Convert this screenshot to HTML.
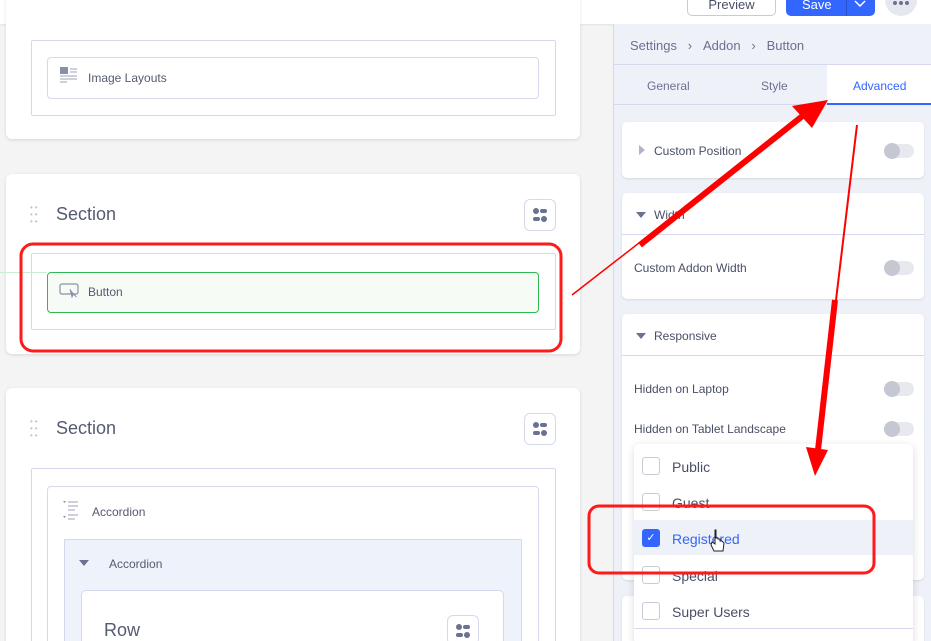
<!DOCTYPE html>
<html><head><meta charset="utf-8"><style>
*{box-sizing:border-box;margin:0;padding:0}
html,body{width:931px;height:641px;overflow:hidden}
body{background:#f4f4f5;font-family:"Liberation Sans",sans-serif;position:relative;color:#4a4f66}
.a{position:absolute}
.card{position:absolute;background:#fff;border-radius:6px;box-shadow:0 1px 3px rgba(0,0,0,.12)}
.box{position:absolute;border:1px solid #d6d8ee;border-radius:2px}
.el{position:absolute;border:1px solid #d6d8ee;border-radius:4px;background:#fff;font-size:12px;color:#555b70}
.ib{position:absolute;width:32px;height:32px;border:1px solid #d6d8ee;border-radius:6px;background:#fff}
.tg{position:absolute;width:30px;height:14px;border-radius:7px;background:#e8e9ee}
.tg:before{content:"";position:absolute;left:0;top:-1px;width:16px;height:16px;border-radius:50%;background:#c5c8d3}
.pc{position:absolute;left:622px;width:302px;background:#fff;border-radius:5px;box-shadow:0 1px 2px rgba(0,0,0,.1);font-size:12px;color:#4a4f66}
.cb{position:absolute;left:8px;width:18px;height:18px;border:1px solid #c8cad6;border-radius:3px;background:#fff}
.it{position:absolute;left:38px;font-size:14px;color:#4a4f66}
</style></head><body>
<div class="a" style="left:0;top:0;width:931px;height:24px;background:#fff;box-shadow:0 1px 2px rgba(0,0,0,.08)"></div>
<div class="a" style="left:687px;top:-10px;width:89px;height:26px;border:1px solid #c8cad6;border-radius:5px;background:#fff;text-align:center;font-size:13px;line-height:24px;color:#4a4f66;padding-top:2px">Preview</div>
<div class="a" style="left:786px;top:-10px;width:89px;height:26px;border-radius:5px;background:#3366ff;color:#fff;font-size:13px;line-height:26px;padding-left:16px;padding-top:2px">Save</div>
<div class="a" style="left:846px;top:-10px;width:1px;height:26px;background:#2452d0"></div>
<svg class="a" style="left:852px;top:0" width="16" height="10"><path d="M3 1l5 5 5-5" fill="none" stroke="#fff" stroke-width="1.5"/></svg>
<div class="a" style="left:885px;top:-16px;width:32px;height:32px;border-radius:50%;background:#e6e8ef"></div>
<svg class="a" style="left:891px;top:0" width="20" height="8"><circle cx="4" cy="3" r="2" fill="#6b7190"/><circle cx="10" cy="3" r="2" fill="#6b7190"/><circle cx="16" cy="3" r="2" fill="#6b7190"/></svg>

<div class="card" style="left:6px;top:-10px;width:574px;height:149px"></div>
<div class="box" style="left:31px;top:40px;width:525px;height:76px"></div>
<div class="el" style="left:47px;top:57px;width:492px;height:42px"></div>
<svg class="a" style="left:58px;top:66px" width="22" height="22"><rect x="2" y="1" width="8" height="7" fill="#8a8fa8"/><path d="M12 3h7M12 6h7M2 10h17M2 13h17M2 16h7" stroke="#b0b4c8" stroke-width="1.2"/></svg>
<div class="a" style="left:88px;top:71px;font-size:12px;color:#555b70">Image Layouts</div>

<div class="card" style="left:6px;top:174px;width:574px;height:180px"></div>
<div class="a" style="left:30px;top:204px;color:#c0c3d0;font-size:8px;line-height:7px;letter-spacing:2px">••<br>••<br>••</div>
<div class="a" style="left:56px;top:204px;font-size:18px;color:#555b70">Section</div>
<div class="ib" style="left:524px;top:199px"></div>
<svg class="a" style="left:532px;top:207px" width="16" height="16"><circle cx="4" cy="4" r="3" fill="#6b7190"/><rect x="8" y="2" width="7" height="4" rx="2" fill="#6b7190"/><rect x="1" y="10" width="7" height="4" rx="2" fill="#6b7190"/><circle cx="12" cy="12" r="3" fill="#6b7190"/></svg>
<div class="box" style="left:31px;top:253px;width:525px;height:77px"></div>
<div class="el" style="left:47px;top:272px;width:492px;height:41px;border-color:#2dba52;background:#f6fbf6"></div>
<div class="a" style="left:0;top:272px;width:47px;height:1px;background:#c9ecd2"></div>
<svg class="a" style="left:59px;top:283px" width="22" height="16"><rect x="1" y="1" width="18" height="10" rx="2" fill="none" stroke="#8a8fa8" stroke-width="1.2"/><path d="M11 6l2 8 1.5-3 3 3" fill="#8a8fa8" stroke="#8a8fa8"/></svg>
<div class="a" style="left:88px;top:285px;font-size:12px;color:#555b70">Button</div>

<div class="card" style="left:6px;top:388px;width:574px;height:270px"></div>
<div class="a" style="left:30px;top:418px;color:#c0c3d0;font-size:8px;line-height:7px;letter-spacing:2px">••<br>••<br>••</div>
<div class="a" style="left:56px;top:418px;font-size:18px;color:#555b70">Section</div>
<div class="ib" style="left:524px;top:413px"></div>
<svg class="a" style="left:532px;top:421px" width="16" height="16"><circle cx="4" cy="4" r="3" fill="#6b7190"/><rect x="8" y="2" width="7" height="4" rx="2" fill="#6b7190"/><rect x="1" y="10" width="7" height="4" rx="2" fill="#6b7190"/><circle cx="12" cy="12" r="3" fill="#6b7190"/></svg>
<div class="box" style="left:31px;top:468px;width:525px;height:190px"></div>
<div class="el" style="left:47px;top:486px;width:492px;height:170px"></div>
<svg class="a" style="left:62px;top:500px" width="22" height="20"><path d="M1 1h3l-1.5 2zM1 16h3l-1.5 2z" fill="#8a8fa8"/><path d="M6 2h10M6 6h10M6 10h7M6 15h10M6 19h7" stroke="#b0b4c8" stroke-width="1.2"/></svg>
<div class="a" style="left:92px;top:505px;font-size:12px;color:#555b70">Accordion</div>
<div class="a" style="left:64px;top:539px;width:458px;height:110px;background:#edf2fb;border:1px solid #d6d8ee"></div>
<svg class="a" style="left:79px;top:560px" width="10" height="6"><path d="M0 0h10L5 6z" fill="#6b7190"/></svg>
<div class="a" style="left:109px;top:557px;font-size:12px;color:#555b70">Accordion</div>
<div class="a" style="left:81px;top:590px;width:423px;height:60px;background:#fff;border:1px solid #d6d8ee;border-radius:5px"></div>
<div class="a" style="left:104px;top:620px;font-size:18px;color:#555b70">Row</div>
<div class="ib" style="left:447px;top:615px;width:32px;height:30px"></div>
<svg class="a" style="left:455px;top:623px" width="16" height="16"><circle cx="4" cy="4" r="3" fill="#6b7190"/><rect x="8" y="2" width="7" height="4" rx="2" fill="#6b7190"/><rect x="1" y="10" width="7" height="4" rx="2" fill="#6b7190"/><circle cx="12" cy="12" r="3" fill="#6b7190"/></svg>

<div class="a" style="left:613px;top:24px;width:318px;height:617px;background:#eef1f8;border-left:1px solid #d6d8ee"></div>
<div class="a" style="left:630px;top:38px;font-size:13px;color:#6b7190">Settings&nbsp;&nbsp;&nbsp;›&nbsp;&nbsp;&nbsp;Addon&nbsp;&nbsp;&nbsp;›&nbsp;&nbsp;&nbsp;Button</div>
<div class="a" style="left:614px;top:64px;width:317px;height:1px;background:#d6d8ee"></div>
<div class="a" style="left:647px;top:79px;font-size:12px;color:#6b7190">General</div>
<div class="a" style="left:761px;top:79px;font-size:12px;color:#6b7190">Style</div>
<div class="a" style="left:827px;top:65px;width:104px;height:40px;background:#fff;border-bottom:2px solid #3366ff"></div>
<div class="a" style="left:853px;top:79px;font-size:12px;color:#3366ff">Advanced</div>
<div class="a" style="left:614px;top:104px;width:213px;height:1px;background:#d6d8ee"></div>

<div class="pc" style="top:122px;height:56px"><svg class="a" style="left:17px;top:23px" width="6" height="10"><path d="M0 0v10l6-5z" fill="#b0b4c8"/></svg><div class="a" style="left:32px;top:22px">Custom Position</div><div class="tg" style="left:262px;top:22px"></div></div>
<div class="pc" style="top:193px;height:106px"><svg class="a" style="left:14px;top:19px" width="10" height="6"><path d="M0 0h10L5 6z" fill="#6b7190"/></svg><div class="a" style="left:32px;top:15px">Width</div><div class="a" style="left:0;top:41px;width:302px;height:1px;background:#d6d8ee"></div><div class="a" style="left:12px;top:68px">Custom Addon Width</div><div class="tg" style="left:262px;top:68px"></div></div>
<div class="pc" style="top:314px;height:266px"><svg class="a" style="left:14px;top:19px" width="10" height="6"><path d="M0 0h10L5 6z" fill="#6b7190"/></svg><div class="a" style="left:32px;top:15px">Responsive</div><div class="a" style="left:0;top:41px;width:302px;height:1px;background:#d6d8ee"></div><div class="a" style="left:12px;top:68px">Hidden on Laptop</div><div class="tg" style="left:262px;top:68px"></div><div class="a" style="left:12px;top:108px">Hidden on Tablet Landscape</div><div class="tg" style="left:262px;top:108px"></div></div>
<div class="pc" style="top:596px;height:60px"></div>

<div class="a" style="left:634px;top:444px;width:279px;height:200px;background:#fff;border-radius:5px;box-shadow:0 2px 8px rgba(0,0,0,.15)">
<div class="a" style="left:0;top:76px;width:279px;height:35px;background:#eef1f8"></div>
<div class="cb" style="top:13px"></div><div class="it" style="top:15px">Public</div>
<div class="cb" style="top:49px"></div><div class="it" style="top:51px">Guest</div>
<div class="cb" style="top:85px;background:#3366ff;border-color:#3366ff;color:#fff;font-size:11px;text-align:center;line-height:16px">✓</div><div class="it" style="top:87px;color:#3366ff">Registered</div>
<div class="cb" style="top:122px"></div><div class="it" style="top:124px">Special</div>
<div class="cb" style="top:158px"></div><div class="it" style="top:160px">Super Users</div>
<div class="a" style="left:0;top:184px;width:279px;height:1px;background:#d6d8ee"></div>
</div>

<svg class="a" style="left:0;top:0" width="931" height="641">
<rect x="21" y="244" width="540" height="107" rx="12" fill="none" stroke="#ff1a1a" stroke-width="3"/>
<rect x="589" y="506" width="285" height="67" rx="10" fill="none" stroke="#ff1a1a" stroke-width="3"/>
<path d="M572 295L805 114" stroke="#ff0000" stroke-width="1.5"/>
<path d="M640 245L805 114" stroke="#ff0000" stroke-width="6"/>
<path d="M828 100L792 106L812 128Z" fill="#ff0000"/>
<path d="M857 125L818 450" stroke="#ff0000" stroke-width="2"/>
<path d="M835 300L818 450" stroke="#ff0000" stroke-width="6"/>
<path d="M815 476L806 447L828 450Z" fill="#ff0000"/>
<path d="M715 530v14l-3-2-1 3 3 6h9l1-8-2-2-2 0v-2l-2 0v-1l-2 0v-8z" fill="#fff" stroke="#222" stroke-width="1"/>
</svg>
</body></html>
